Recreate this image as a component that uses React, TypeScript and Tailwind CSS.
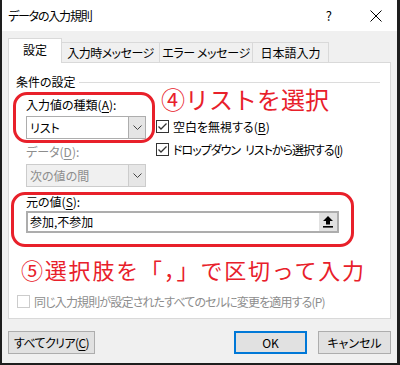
import React from 'react';

const RED = 'text-[#e8202a]';

const Chevron = ({ color = '#444' }: { color?: string }) => (
  <svg width="9" height="5" viewBox="0 0 9 5">
    <polyline points="0.5,0.5 4.5,4.5 8.5,0.5" fill="none" stroke={color} strokeWidth="1" />
  </svg>
);

const Select = ({ value, disabled }: { value: string; disabled?: boolean }) => (
  <div
    className={`flex h-[23px] w-[120px] border ${
      disabled ? 'border-[#cccccc] bg-[#f0f0f0] text-[#8d8d8d]' : 'border-[#adadad] bg-white'
    }`}
  >
    <div className="flex flex-1 items-center pl-[3px] leading-4">{value}</div>
    <div
      className={`flex w-[17px] items-center justify-center border-l ${
        disabled ? 'border-[#cccccc] bg-[#e6e6e6]' : 'border-[#adadad] bg-[#e5e5e5]'
      }`}
    >
      <Chevron />
    </div>
  </div>
);

const Checkbox = ({ checked, disabled }: { checked?: boolean; disabled?: boolean }) => (
  <div
    className={`flex h-[13px] w-[13px] shrink-0 items-center justify-center border bg-white ${
      disabled ? 'border-[#cccccc]' : 'border-[#333333]'
    }`}
  >
    {checked && (
      <svg width="11" height="11" viewBox="0 0 11 11">
        <polyline points="1.5,5.5 4,8 9.5,2.5" fill="none" stroke="#333" strokeWidth="1.3" />
      </svg>
    )}
  </div>
);

const Key = ({ k }: { k: string }) => (
  <>
    (<span className="underline underline-offset-2">{k}</span>)
  </>
);

export default function App() {
  return (
    <div className="relative flex h-[365px] w-[400px] flex-col overflow-hidden whitespace-nowrap border-x-2 border-r-[3px] border-b-2 border-[#1e1e1e] bg-[#f0f0f0] font-['Noto_Sans_CJK_JP','Noto_Sans',sans-serif] text-[12px] text-black [font-feature-settings:'palt']">
      {/* title bar */}
      <div className="flex h-[31px] shrink-0 items-center bg-white pl-[6px]">
        <span className="leading-4 tracking-[-1.2px]">データの入力規則</span>
        <span className="ml-auto text-[13px] leading-4">?</span>
        <svg className="ml-[38px] mr-[15px]" width="12" height="12" viewBox="0 0 12 12">
          <path d="M0.5 0.5 L11.5 11.5 M11.5 0.5 L0.5 11.5" stroke="#000" strokeWidth="1" />
        </svg>
      </div>

      {/* tabs */}
      <div className="mt-[7px] flex h-[25px] items-end pl-[6px]">
        <div className="relative z-10 flex h-[25px] w-[54px] items-start justify-center border border-b-0 border-[#d9d9d9] bg-white pt-[3px] leading-4">
          設定
        </div>
        <div className="-ml-px flex h-[21px] w-[99px] items-start justify-center border border-b-0 border-[#d9d9d9] pt-[2px] leading-4 tracking-[-0.5px]">
          入力時メッセージ
        </div>
        <div className="-ml-px flex h-[21px] w-[94px] items-start justify-center border border-b-0 border-[#d9d9d9] pt-[2px] leading-4 tracking-[-0.4px]">
          エラー メッセージ
        </div>
        <div className="-ml-px flex h-[21px] w-[77px] items-start justify-center border border-b-0 border-[#d9d9d9] pt-[2px] leading-4">
          日本語入力
        </div>
      </div>

      {/* panel */}
      <div className="relative -mt-px ml-[6px] flex h-[257px] w-[383px] flex-col border border-[#d9d9d9] bg-white">
        <div className="mt-[11px] flex h-4 items-center">
          <span className="ml-[7px] leading-4">条件の設定</span>
          <div className="ml-[3px] mr-[10px] h-px flex-1 bg-[#dcdcdc]" />
        </div>

        <div className="mt-[7px] flex">
          <div className="ml-[17px] flex w-[120px] flex-col">
            <div className="h-4 leading-4">
              入力値の種類<Key k="A" />:
            </div>
            <div className="mt-[3px]">
              <Select value="リスト" />
            </div>
            <div className="mt-[5px] h-4 leading-4 text-[#8d8d8d]">
              データ<Key k="D" />:
            </div>
            <div className="mt-[4px]">
              <Select value="次の値の間" disabled />
            </div>
          </div>

          <div className="ml-[10px] flex flex-col">
            <div className="mt-[23px] flex h-[13px] items-center">
              <Checkbox checked />
              <span className="ml-[4px] leading-4">
                空白を無視する<Key k="B" />
              </span>
            </div>
            <div className="mt-[10px] flex h-[13px] items-center">
              <Checkbox checked />
              <span className="ml-[4px] leading-4 tracking-[-1px]">
                ドロップダウン
                <span className="ml-[5px]">
                  リストから選択する<Key k="I" />
                </span>
              </span>
            </div>
          </div>
        </div>

        <div className="ml-[17px] mt-[7px] h-4 leading-4">
          元の値<Key k="S" />:
        </div>
        <div className="ml-[17px] mt-[1px] flex h-[22px] w-[313px] border-2 border-[#adadad] bg-white">
          <div className="flex flex-1 items-center pl-[2px] leading-4">参加,不参加</div>
          <div className="flex w-[18px] items-center justify-center bg-[#e1e1e1]">
            <svg width="10" height="12" viewBox="0 0 10 12">
              <path d="M5 0 L10 5 H7 V8.5 H3 V5 H0 Z" fill="#000" />
              <rect x="0" y="10" width="10" height="1.6" fill="#000" />
            </svg>
          </div>
        </div>

        <div className="ml-[8px] mt-[62px] flex h-[13px] items-center">
          <Checkbox disabled />
          <span className="ml-[4px] leading-4 tracking-[-0.85px] text-[#8d8d8d]">
            同じ入力規則が設定されたすべてのセルに変更を適用する(P)
          </span>
        </div>
      </div>

      {/* buttons */}
      <div className="mt-[12px] flex h-[23px] pl-[6px]">
        <button className="h-[23px] w-[87px] border border-[#adadad] bg-[#e1e1e1] leading-4 tracking-[-0.6px]">
          すべてクリア<Key k="C" />
        </button>
        <button className="ml-[139px] h-[23px] w-[73px] border-2 border-[#0078d7] bg-[#e1e1e1] leading-4">
          OK
        </button>
        <button className="ml-[11px] h-[23px] w-[73px] border border-[#adadad] bg-[#e1e1e1] leading-4">
          キャンセル
        </button>
      </div>

      {/* annotations */}
      <div className="pointer-events-none absolute left-[11px] top-[92px] h-[51px] w-[142px] rounded-[14px] border-[3px] border-[#e8202a]" />
      <div className="pointer-events-none absolute left-[9px] top-[192px] h-[55px] w-[343px] rounded-[14px] border-[3px] border-[#e8202a]" />
      <div className={`absolute left-[159px] top-[87px] text-[24px] leading-none [font-feature-settings:normal] ${RED}`}>
        ④リストを選択
      </div>
      <div className={`absolute left-[19px] top-[258px] text-[22px] leading-none tracking-[1.8px] [font-feature-settings:normal] ${RED}`}>
        ⑤選択肢を「，」で区切って入力
      </div>
    </div>
  );
}
